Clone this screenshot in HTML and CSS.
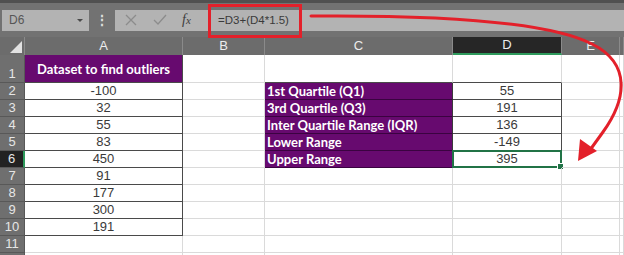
FILE: index.html
```html
<!DOCTYPE html>
<html lang="en">
  <head>
    <meta charset="UTF-8" />
    <meta name="viewport" content="width=device-width, initial-scale=1.0" />
    <title>Outliers - IQR</title>
    <link rel="stylesheet" href="styles.css">
  </head>
  <body>
    <div class="window">
      <div class="toolbar">
        <div class="name-box">
          <span>D6</span>
          <span class="caret"></span>
        </div>
        <div class="grip">&#8942;</div>
        <div class="formula-area">
          <div class="fx-buttons">
            <svg class="icon" width="14" height="14" viewBox="0 0 14 14">
              <path d="M2 2 L12 12 M12 2 L2 12" stroke="#8c8c8c" stroke-width="1.3" fill="none" />
            </svg>
            <svg class="icon" width="16" height="14" viewBox="0 0 16 14">
              <path d="M2 7 L6 11 L14 2" stroke="#8c8c8c" stroke-width="1.3" fill="none" />
            </svg>
            <span class="fx">f<span class="fx-x">x</span></span>
          </div>
          <div class="formula">=D3+(D4*1.5)</div>
        </div>
      </div>

      <div class="sheet">
        <div class="row header-row">
          <div class="corner"><span class="select-all"></span></div>
          <div class="col-head">A</div>
          <div class="col-head">B</div>
          <div class="col-head">C</div>
          <div class="col-head active">D</div>
          <div class="col-head">E</div>
          <div class="col-head"></div>
        </div>

        <div class="row tall">
          <div class="row-head">1</div>
          <div class="cell title">Dataset to find outliers</div>
          <div class="cell"></div>
          <div class="cell dark-bottom"></div>
          <div class="cell dark-bottom"></div>
          <div class="cell"></div>
          <div class="cell"></div>
        </div>

        <div class="row">
          <div class="row-head">2</div>
          <div class="cell data">-100</div>
          <div class="cell"></div>
          <div class="cell label">1st Quartile (Q1)</div>
          <div class="cell data">55</div>
          <div class="cell"></div>
          <div class="cell"></div>
        </div>

        <div class="row">
          <div class="row-head">3</div>
          <div class="cell data">32</div>
          <div class="cell"></div>
          <div class="cell label">3rd Quartile (Q3)</div>
          <div class="cell data">191</div>
          <div class="cell"></div>
          <div class="cell"></div>
        </div>

        <div class="row">
          <div class="row-head">4</div>
          <div class="cell data">55</div>
          <div class="cell"></div>
          <div class="cell label">Inter Quartile Range (IQR)</div>
          <div class="cell data">136</div>
          <div class="cell"></div>
          <div class="cell"></div>
        </div>

        <div class="row">
          <div class="row-head">5</div>
          <div class="cell data">83</div>
          <div class="cell"></div>
          <div class="cell label">Lower Range</div>
          <div class="cell data">-149</div>
          <div class="cell"></div>
          <div class="cell"></div>
        </div>

        <div class="row">
          <div class="row-head active">6</div>
          <div class="cell data">450</div>
          <div class="cell"></div>
          <div class="cell label">Upper Range</div>
          <div class="cell data selected">395<span class="fill-handle"></span></div>
          <div class="cell"></div>
          <div class="cell"></div>
        </div>

        <div class="row">
          <div class="row-head">7</div>
          <div class="cell data">91</div>
          <div class="cell"></div>
          <div class="cell"></div>
          <div class="cell"></div>
          <div class="cell"></div>
          <div class="cell"></div>
        </div>

        <div class="row">
          <div class="row-head">8</div>
          <div class="cell data">177</div>
          <div class="cell"></div>
          <div class="cell"></div>
          <div class="cell"></div>
          <div class="cell"></div>
          <div class="cell"></div>
        </div>

        <div class="row">
          <div class="row-head">9</div>
          <div class="cell data">300</div>
          <div class="cell"></div>
          <div class="cell"></div>
          <div class="cell"></div>
          <div class="cell"></div>
          <div class="cell"></div>
        </div>

        <div class="row">
          <div class="row-head">10</div>
          <div class="cell data">191</div>
          <div class="cell"></div>
          <div class="cell"></div>
          <div class="cell"></div>
          <div class="cell"></div>
          <div class="cell"></div>
        </div>

        <div class="row">
          <div class="row-head">11</div>
          <div class="cell"></div>
          <div class="cell"></div>
          <div class="cell"></div>
          <div class="cell"></div>
          <div class="cell"></div>
          <div class="cell"></div>
        </div>

        <div class="row">
          <div class="row-head"></div>
          <div class="cell"></div>
          <div class="cell"></div>
          <div class="cell"></div>
          <div class="cell"></div>
          <div class="cell"></div>
          <div class="cell"></div>
        </div>
      </div>

      <!-- annotation: red box round the formula and the arrow to D6 -->
      <svg class="annotation" width="624" height="255" viewBox="0 0 624 255">
        <rect x="209.5" y="5.5" width="91" height="31" fill="none" stroke="#e3202a" stroke-width="3" />
        <path d="M311 16 C 430 15 545 20 592 44 C 632 64 626 100 603 132 L 590 150"
              fill="none" stroke="#e3202a" stroke-width="3" stroke-linecap="round" />
        <polygon points="578,161 580,139 597,151" fill="#e3202a" />
      </svg>
    </div>
  </body>
</html>
```

FILE: styles.css
```css
body {
  margin: 0;
  background-color: #ffffff;
  font-family: "Liberation Sans", Arial, sans-serif;
  overflow: hidden;
}

.window {
  position: relative;
  width: 624px;
  height: 255px;
  overflow: hidden;
}

.toolbar {
  height: 34px;
  border-top: 3px solid #505050;
  background-color: #727272;
  display: flex;
  align-items: center;
  padding-left: 2px;
}

.name-box {
  width: 87px;
  height: 21px;
  background-color: #b3b3b3;
  display: flex;
  align-items: center;
  justify-content: space-between;
  padding: 0 6px 0 7px;
  box-sizing: border-box;
  font-size: 12px;
  color: #565656;
}

.caret {
  width: 0;
  height: 0;
  border-left: 3px solid transparent;
  border-right: 3px solid transparent;
  border-top: 3px solid #4a4a4a;
}

.grip {
  width: 26px;
  text-align: center;
  color: #dcdcdc;
  font-size: 14px;
  font-weight: bold;
}

.formula-area {
  flex: 1;
  height: 21px;
  display: flex;
  align-items: center;
  background-color: #b3b3b3;
}

.fx-buttons {
  width: 92px;
  display: flex;
  align-items: center;
  gap: 14px;
  padding-left: 9px;
  box-sizing: border-box;
}

.fx {
  font-family: "Liberation Serif", serif;
  font-style: italic;
  font-size: 14px;
  color: #3c3c3c;
}

.fx-x {
  font-size: 11px;
}

.formula {
  padding-left: 11px;
  font-size: 11.5px;
  color: #3a3a3a;
}

.sheet {
  display: flex;
  flex-direction: column;
}

.row {
  display: grid;
  grid-template-columns: 25px 158px 82px 188px 109px 58px 1fr;
  height: 17px;
}

.row.tall {
  height: 28px;
}

.header-row {
  height: 18px;
  background-color: #6c6c6c;
}

.corner {
  position: relative;
  border-right: 1px solid #8a8a8a;
}

.select-all {
  position: absolute;
  right: 2px;
  bottom: 2px;
  width: 0;
  height: 0;
  border-left: 12px solid transparent;
  border-bottom: 12px solid #e2e2e2;
}

.col-head {
  color: #ededed;
  font-size: 13px;
  text-align: center;
  line-height: 18px;
  border-right: 1px solid #8a8a8a;
}

.col-head.active {
  background-color: #262626;
  border-bottom: 2px solid #2e9a5c;
  line-height: 16px;
}

.row-head {
  background-color: #6f6f6f;
  color: #e6e6e6;
  font-size: 13px;
  text-align: center;
  border-bottom: 1px solid #585858;
  border-right: 1px solid #585858;
  display: flex;
  align-items: flex-end;
  justify-content: center;
  line-height: 16px;
}

.row-head.active {
  background-color: #222222;
  border-right: 2px solid #2e9a5c;
}

.cell {
  position: relative;
  border-right: 1px solid #dadada;
  border-bottom: 1px solid #dadada;
  font-size: 13px;
  line-height: 16px;
  color: #3a3a3a;
}

.cell.dark-bottom {
  border-bottom-color: #4a4a4a;
}

.cell.title {
  background-color: #670a6f;
  color: #ffffff;
  font-family: Lato, "Liberation Sans", sans-serif;
  font-weight: bold;
  font-size: 13px;
  display: flex;
  align-items: center;
  justify-content: center;
  border-right-color: #4a4a4a;
  border-bottom-color: #4a4a4a;
}

.cell.data {
  text-align: center;
  border-right-color: #4a4a4a;
  border-bottom-color: #4a4a4a;
}

.cell.label {
  background-color: #670a6f;
  color: #ffffff;
  font-family: Lato, "Liberation Sans", sans-serif;
  font-weight: bold;
  padding-left: 2px;
  border-bottom-color: #3a0340;
  border-right-color: #3a3a3a;
}

.cell.selected {
  border: 2px solid #217346;
  margin: -1px 0 0 -1px;
  line-height: 14px;
}

.fill-handle {
  position: absolute;
  right: -4px;
  bottom: -4px;
  width: 5px;
  height: 5px;
  background-color: #217346;
  border: 1px solid #ffffff;
}

.annotation {
  position: absolute;
  top: 0;
  left: 0;
  pointer-events: none;
}
```
